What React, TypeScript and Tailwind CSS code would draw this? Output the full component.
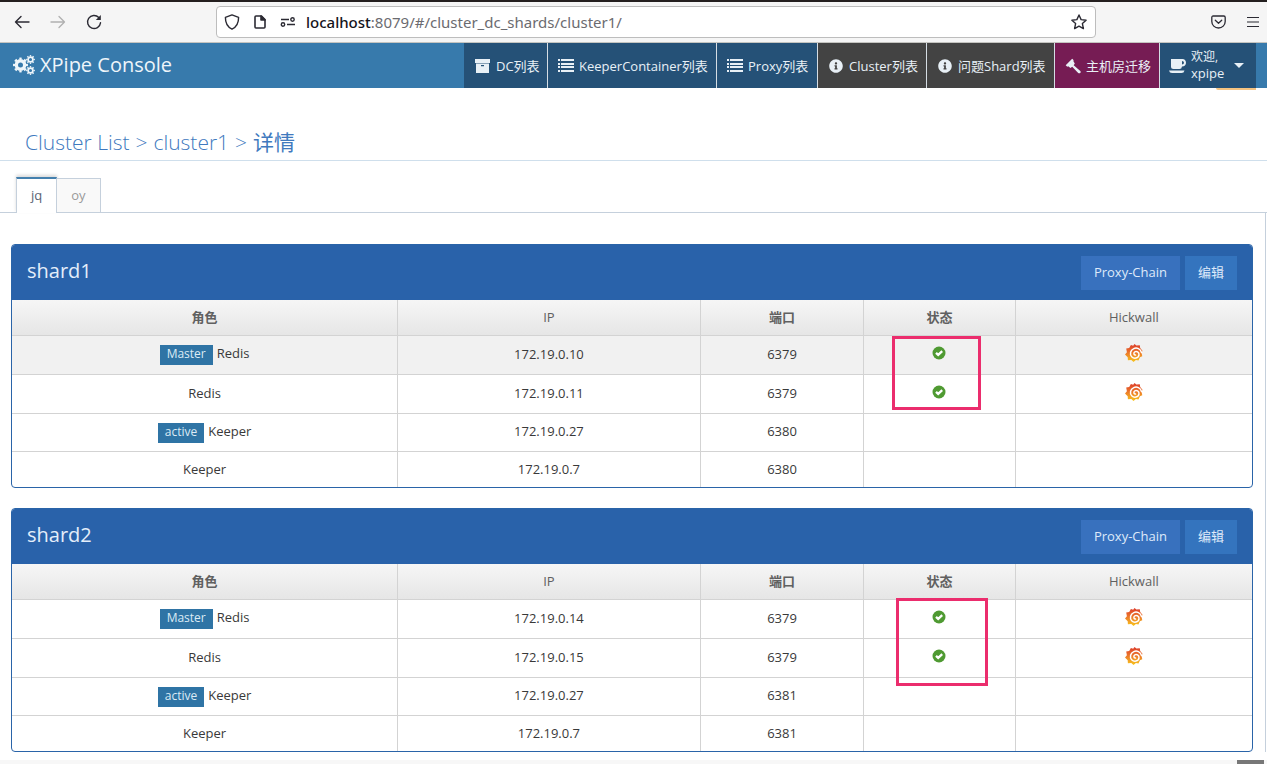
import clsx from "clsx";
import { ReactNode, useState } from "react";
import { FaInfoCircle } from "react-icons/fa";

type Role = "Redis" | "Keeper";

interface Instance {
    role: Role;
    badge?: string;
    ip: string;
    port: number;
    hovered?: boolean;
}

interface Shard {
    name: string;
    markClass: string;
    instances: Instance[];
}

const shards: Shard[] = [
    {
        name: "shard1",
        markClass: "left-7 top-0 h-[74px] w-[89px]",
        instances: [
            { role: "Redis", badge: "Master", ip: "172.19.0.10", port: 6379, hovered: true },
            { role: "Redis", ip: "172.19.0.11", port: 6379 },
            { role: "Keeper", badge: "active", ip: "172.19.0.27", port: 6380 },
            { role: "Keeper", ip: "172.19.0.7", port: 6380 },
        ],
    },
    {
        name: "shard2",
        markClass: "left-8 -top-0.5 h-[88px] w-[92px]",
        instances: [
            { role: "Redis", badge: "Master", ip: "172.19.0.14", port: 6379 },
            { role: "Redis", ip: "172.19.0.15", port: 6379 },
            { role: "Keeper", badge: "active", ip: "172.19.0.27", port: 6381 },
            { role: "Keeper", ip: "172.19.0.7", port: 6381 },
        ],
    },
];

const CogsIcon = () => (
    <svg viewBox="0 0 22 20" className="h-5 w-[22px]" fill="none" stroke="currentColor">
        <circle cx="7.5" cy="10" r="4.2" strokeWidth="3.4" />
        <circle cx="7.5" cy="10" r="6.5" strokeWidth="2" pathLength="16" strokeDasharray="1 1" strokeDashoffset="0.5" />
        <circle cx="17.5" cy="4.5" r="2.4" strokeWidth="1.7" />
        <circle cx="17.5" cy="4.5" r="3.7" strokeWidth="1.4" pathLength="16" strokeDasharray="1 1" strokeDashoffset="0.5" />
        <circle cx="17.5" cy="15.5" r="2.4" strokeWidth="1.7" />
        <circle cx="17.5" cy="15.5" r="3.7" strokeWidth="1.4" pathLength="16" strokeDasharray="1 1" strokeDashoffset="0.5" />
    </svg>
);

const ArchiveIcon = () => (
    <svg viewBox="0 0 15 14" className="h-[14px] w-[15px]" fill="currentColor">
        <path d="M0 0h15v4H0z" />
        <path fillRule="evenodd" d="M1 4.500h13V14H1zM6 6v1.200h3V6z" />
    </svg>
);

const ListIcon = () => (
    <svg viewBox="0 0 16 13" className="h-[13px] w-4" fill="currentColor">
        <path d="M0 0h2v2H0zM3 0h13v2H3zM0 4h2v2H0zM3 4h13v2H3zM0 7h2v2H0zM3 7h13v2H3zM0 11h2v2H0zM3 11h13v2H3z" />
    </svg>
);

const GavelIcon = () => (
    <svg viewBox="0 0 16 16" className="size-4" fill="currentColor">
        <path d="M7.200.7 8.700 2.200 8.300 3 9.800 5.500 8.700 7.200 15.300 13q.9 1-.1 1.900t-2 0L7.200 8.700 5.500 9.900 3.200 8.300 2.300 8.800.7 7.200z" />
    </svg>
);

const CoffeeIcon = () => (
    <svg viewBox="0 0 17 14" className="h-[14px] w-[17px]" fill="currentColor">
        <path fillRule="evenodd" d="M2 0h11.500C15.500 0 17 1.600 17 3.700S15.500 7.400 13 7.400Q12.700 10 10.500 10H4.500Q2 10 2 7.500zM13 1.900v3.600q2 0 2-1.800T13 1.900z" />
        <path d="M0 11.500h15.500q-.5 2.500-3 2.500H3Q.5 14 0 11.500z" />
    </svg>
);

const BrowserBar = () => (
    <div className="flex h-[43px] items-center border-t-2 border-b border-t-[#241f1f] border-b-[#c4c4c0] bg-[#f5f5f5] pr-[7px] pl-3.5 text-[#2b2a33]">
        <button aria-label="Back" className="w-9">
            <svg viewBox="0 0 16 14" className="h-[14px] w-4" fill="none" stroke="currentColor" strokeWidth="1.4" strokeLinecap="round" strokeLinejoin="round">
                <path d="M15 7H1.500M7 1.500 1.500 7 7 12.500" />
            </svg>
        </button>
        <button aria-label="Forward" className="w-9 text-[#b0b0b0]" disabled>
            <svg viewBox="0 0 16 14" className="h-[14px] w-4" fill="none" stroke="currentColor" strokeWidth="1.3" strokeLinecap="round" strokeLinejoin="round">
                <path d="M1 7h13.500M9 1.500 14.500 7 9 12.500" />
            </svg>
        </button>
        <button aria-label="Reload">
            <svg viewBox="0 0 16 16" className="size-4" fill="none" stroke="currentColor" strokeWidth="1.4" strokeLinecap="round">
                <path d="M14.500 8.800A6.500 6.500 0 1 1 12.800 3.600" />
                <path d="M14.800 1v5H9.800z" fill="currentColor" stroke="none" />
            </svg>
        </button>
        <div className="ml-[114px] flex h-8 grow items-center rounded border border-[#bdbdbd] bg-white pr-2 pl-[7px]">
            <svg viewBox="0 0 16 16" className="size-4" fill="none" stroke="currentColor" strokeWidth="1.4" strokeLinejoin="round">
                <path d="M8 .9 14.600 3.300c.1 5.600-1.500 9.500-6.600 11.900C2.900 12.800 1.300 8.900 1.400 3.300z" />
            </svg>
            <svg viewBox="0 0 12 14" className="ml-[14px] h-[14px] w-3" fill="none" stroke="currentColor" strokeWidth="1.6" strokeLinejoin="round">
                <path d="M2 1h5.500L11 4.500V12q0 1-1 1H2q-1 0-1-1V2q0-1 1-1z" />
                <path d="M7 1v4h4z" fill="currentColor" />
            </svg>
            <svg viewBox="0 0 16 10" className="ml-3.5 h-2.5 w-4" fill="none" stroke="currentColor" strokeWidth="1.400">
                <path d="M1 2.500h8M7 7.500h8" />
                <circle cx="12.500" cy="2.500" r="1.700" />
                <circle cx="3" cy="7.500" r="1.700" />
            </svg>
            <label htmlFor="url" className="ml-2.5 font-['Noto_Sans',sans-serif] text-[15px] font-medium text-[#15141a]">localhost</label>
            <input id="url" readOnly value=":8079/#/cluster_dc_shards/cluster1/" className="min-w-0 grow font-['Noto_Sans',sans-serif] text-[15px] text-[#6b6b70] outline-none" />
            <button aria-label="Bookmark this page">
                <svg viewBox="0 0 16 16" className="size-4" fill="none" stroke="currentColor" strokeWidth="1.400" strokeLinejoin="round">
                    <path d="m8 1 2.100 4.600 5 .6-3.700 3.400 1 5L8 12.100l-4.400 2.500 1-5L.9 6.200l5-.6z" />
                </svg>
            </button>
        </div>
        <button aria-label="Save to Pocket" className="ml-[115px]">
            <svg viewBox="0 0 15 14" className="h-[14px] w-[15px]" fill="none" stroke="currentColor" strokeWidth="1.300" strokeLinecap="round" strokeLinejoin="round">
                <path d="M2.200 1h10.600q1.400 0 1.400 1.400V6.500a6.700 6.500 0 0 1-13.400 0V2.400Q.8 1 2.200 1z" />
                <path d="m4.300 5.200 3.200 3 3.200-3" />
            </svg>
        </button>
        <button aria-label="Open menu" className="ml-5">
            <svg viewBox="0 0 14 12" className="h-3 w-[14px]" stroke="currentColor" strokeWidth="1.200">
                <path d="M1 1.500h12M1 6h12M1 10.500h12" />
            </svg>
        </button>
    </div>
);

interface NavItemProps {
    icon: ReactNode;
    label: string;
    className: string;
}

const NavItem = ({ icon, label, className }: NavItemProps) => (
    <a href="#" className={clsx("flex items-center border-r border-[#d5dde4] whitespace-nowrap", className)}>
        {icon}
        <span className="pt-0.5">{label}</span>
    </a>
);

const Navbar = () => (
    <nav className="relative flex h-[45px] bg-[#377aac] text-[13px] text-[#e8f0f6]">
        <a href="#" className="flex items-center gap-[5px] pb-0.5 pl-[13px] text-xl text-[#eef5fa]">
            <CogsIcon />
            <span>XPipe Console</span>
        </a>
        <div className="mr-[11px] ml-auto flex">
            <NavItem icon={<ArchiveIcon />} label="DC列表" className="w-[84px] gap-1.5 bg-[#255177] pl-[11px]" />
            <NavItem icon={<ListIcon />} label="KeeperContainer列表" className="w-[169px] gap-[5px] bg-[#255177] pl-2.5" />
            <NavItem icon={<ListIcon />} label="Proxy列表" className="w-[101px] gap-[5px] bg-[#255177] pl-2.5" />
            <NavItem icon={<FaInfoCircle className="size-[14px]" />} label="Cluster列表" className="w-[109px] gap-1.5 bg-[#434343] pl-[11px]" />
            <NavItem icon={<FaInfoCircle className="size-[14px]" />} label="问题Shard列表" className="w-32 gap-1.5 bg-[#434343] pl-[11px]" />
            <NavItem icon={<GavelIcon />} label="主机房迁移" className="w-[105px] gap-[5px] bg-[#761c54] pl-2.5" />
            <button className="flex w-24 items-center bg-[#255177] pl-[9px] text-left">
                <CoffeeIcon />
                <span className="ml-[5px] pb-0.5 leading-4">
                    <span className="block text-xs leading-4">欢迎,</span>
                    xpipe
                </span>
                <svg viewBox="0 0 10 5" className="ml-2.5 h-[5px] w-2.5" fill="currentColor">
                    <path d="M0 0h10L5 5z" />
                </svg>
            </button>
        </div>
        <span className="absolute top-full right-[11px] h-0.5 w-10 rounded-bl bg-[#f5c381]" />
    </nav>
);

const StatusIcon = () => (
    <svg viewBox="0 0 14 14" className="mx-auto mb-1 size-[14px]" role="img" aria-label="ok">
        <circle cx="7" cy="7" r="6.500" fill="#4f9a32" />
        <path d="m4 6.800 2.200 2.100L10.200 5.200" fill="none" stroke="#fff" strokeWidth="2.300" />
    </svg>
);

const HickwallLink = () => (
    <a href="#" aria-label="Hickwall" className="mx-auto mb-1 block w-[18px]">
        <svg viewBox="0 0 18 18" className="size-[18px]">
            <path fill="url(#grafana)" d="M9.500 0 11.400 1.600 14.800 1.300 15.200 4.100 17.500 6.800 16.600 9 17.300 12.300 14.900 13.300 13.500 16.500 10.900 16.100 8.500 18 6.300 16 2.900 16.200 2.700 13.200 0 10.500 1.900 8.300 1.200 4.400 4.200 4 5.900 1 8.200 1.700z" />
            <path fill="none" stroke="#fff" strokeWidth="1.500" strokeLinecap="round" d="M16.500 8.500C15.500 4.800 11.800 3.300 8.800 4.600 5.300 6.100 4.500 10.200 6.700 12.700 9 15.200 13.500 14.400 14 10.900 14.300 8.200 11.500 6.700 9.600 8 8.300 9.100 8.900 11 10.500 11.100" />
        </svg>
    </a>
);

const ShardPanel = ({ shard }: { shard: Shard }) => (
    <section className="mb-5 overflow-hidden rounded border border-[#2a64a8] bg-white">
        <header className="flex h-[55px] items-center bg-[#2962aa] px-[15px]">
            <h2 className="pb-1 text-xl text-[#e4eefa]">{shard.name}</h2>
            <div className="ml-auto flex gap-[5px] text-[13px] text-[#dfeafa]">
                <button className="h-[34px] bg-[#3871be] px-[13px]">Proxy-Chain</button>
                <button className="h-[34px] bg-[#3474be] px-[13px]">编辑</button>
            </div>
        </header>
        <table className="w-full table-fixed border-collapse text-center text-[13px] text-[#393939]">
            <colgroup>
                <col className="w-[31.1%]" />
                <col className="w-[24.4%]" />
                <col className="w-[13.2%]" />
                <col className="w-[12.2%]" />
                <col className="w-[19.1%]" />
            </colgroup>
            <thead>
                <tr className="h-[35px] bg-linear-to-b from-[#f6f6f6] to-[#e6e6e6] text-[#606060]">
                    <th className="border-r border-[#d3d3d3] font-bold">角色</th>
                    <th className="border-r border-[#d3d3d3] font-normal">IP</th>
                    <th className="border-r border-[#d3d3d3] font-bold">端口</th>
                    <th className="border-r border-[#d3d3d3] font-bold">状态</th>
                    <th className="font-normal">Hickwall</th>
                </tr>
            </thead>
            <tbody>
                {shard.instances.map((item, index) => (
                    <tr key={index} className={clsx("border-t border-[#d3d3d3]", item.role === "Redis" ? "h-[39px]" : "h-[38px] last:h-9", item.hovered && "bg-[#f1f1f1]")}>
                        <td className="border-r border-[#d3d3d3]">
                            {item.badge && (
                                <span className="mr-1 inline-block h-5 bg-[#2f74a5] px-[7px] text-xs leading-[18px] text-[#dcebf5]">{item.badge}</span>
                            )}
                            {item.role}
                        </td>
                        <td className="border-r border-[#d3d3d3]">{item.ip}</td>
                        <td className="border-r border-[#d3d3d3]">{item.port}</td>
                        <td className="relative border-r border-[#d3d3d3]">
                            {item.role === "Redis" && <StatusIcon />}
                            {index === 0 && <span className={clsx("absolute z-10 border-[3px] border-[#eb2d6d]", shard.markClass)} />}
                        </td>
                        <td>{item.role === "Redis" && <HickwallLink />}</td>
                    </tr>
                ))}
            </tbody>
        </table>
    </section>
);

const App = () => {
    const [activeDc, setActiveDc] = useState("jq");

    return (
        <div className="bg-white font-['Open_Sans','Noto_Sans_CJK_SC',sans-serif]">
            <svg className="absolute size-0" aria-hidden="true">
                <defs>
                    <linearGradient id="grafana" x1="0" y1="0" x2="0" y2="1">
                        <stop offset="0" stopColor="#dc3b2b" />
                        <stop offset="0.5" stopColor="#ec7a2a" />
                        <stop offset="1" stopColor="#f8c51c" />
                    </linearGradient>
                </defs>
            </svg>
            <BrowserBar />
            <Navbar />
            <h1 className="flex h-[73px] items-end gap-1.5 border-b border-[#cfdfec] pb-0.5 pl-[25px] text-[21px] font-light text-[#4079be]">
                <a href="#">Cluster List</a>
                <span>&gt;</span>
                <a href="#">cluster1</a>
                <span>&gt;</span>
                <span className="font-normal">详情</span>
            </h1>
            <div role="tablist" className="flex items-end border-b border-[#c5d0dc] pt-4 pl-4 text-[13px]">
                {["jq", "oy"].map((dc) => (
                    <button
                        key={dc}
                        role="tab"
                        aria-selected={activeDc === dc}
                        onClick={() => setActiveDc(dc)}
                        className={clsx(
                            "border-x px-[14px]",
                            activeDc === dc
                                ? "-mb-px h-9 border-t-2 border-x-[#c5d0dc] border-t-[#4480ae] bg-white text-[#576373] shadow-[0_-2px_3px_rgba(0,0,0,0.15)]"
                                : "h-[34px] border-t border-l-0 border-[#c5d0dc] bg-[#f9f9f9] text-[#999999]"
                        )}
                    >
                        {dc}
                    </button>
                ))}
            </div>
            <main className="mr-px border-r border-[#c5d0dc] pt-[31px] pr-3 pl-[11px]">
                {shards.map((shard) => (
                    <ShardPanel key={shard.name} shard={shard} />
                ))}
            </main>
            <div className="fixed inset-x-0 bottom-0 flex h-1 justify-end bg-[#f7f7f7] pr-[3px]">
                <span className="w-[27px] bg-[#777777]" />
            </div>
        </div>
    );
};

export default App;
